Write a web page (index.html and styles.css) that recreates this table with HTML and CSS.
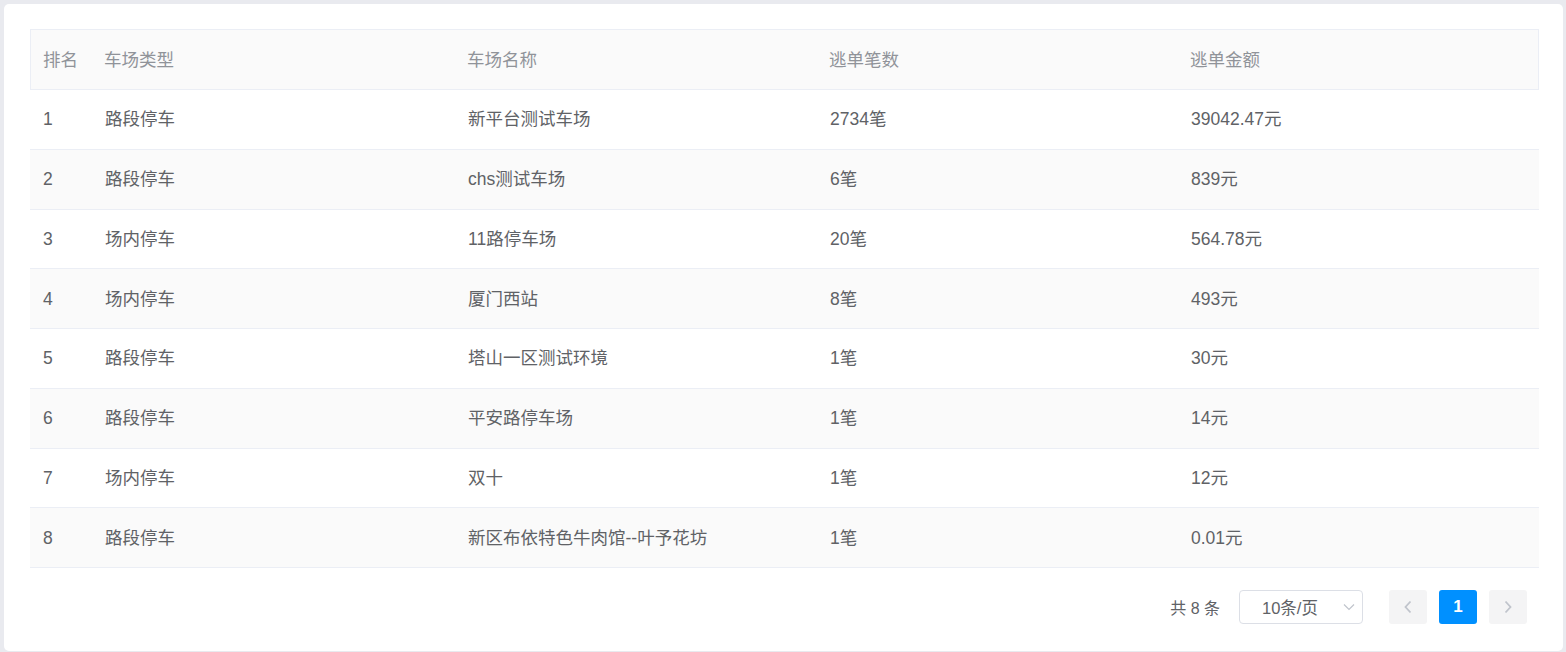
FILE: index.html
```html
<!DOCTYPE html>
<html lang="zh-CN">
<head>
<meta charset="utf-8">
<title>逃单排名</title>
<link rel="stylesheet" href="styles.css">
</head>
<body>
<div class="card">
  <div class="table">
    <div class="row head">
      <div class="cell">排名</div>
      <div class="cell">车场类型</div>
      <div class="cell">车场名称</div>
      <div class="cell">逃单笔数</div>
      <div class="cell">逃单金额</div>
    </div>
    <div class="row">
      <div class="cell">1</div><div class="cell">路段停车</div><div class="cell">新平台测试车场</div><div class="cell">2734笔</div><div class="cell">39042.47元</div>
    </div>
    <div class="row stripe">
      <div class="cell">2</div><div class="cell">路段停车</div><div class="cell">chs测试车场</div><div class="cell">6笔</div><div class="cell">839元</div>
    </div>
    <div class="row">
      <div class="cell">3</div><div class="cell">场内停车</div><div class="cell">11路停车场</div><div class="cell">20笔</div><div class="cell">564.78元</div>
    </div>
    <div class="row stripe">
      <div class="cell">4</div><div class="cell">场内停车</div><div class="cell">厦门西站</div><div class="cell">8笔</div><div class="cell">493元</div>
    </div>
    <div class="row">
      <div class="cell">5</div><div class="cell">路段停车</div><div class="cell">塔山一区测试环境</div><div class="cell">1笔</div><div class="cell">30元</div>
    </div>
    <div class="row stripe">
      <div class="cell">6</div><div class="cell">路段停车</div><div class="cell">平安路停车场</div><div class="cell">1笔</div><div class="cell">14元</div>
    </div>
    <div class="row">
      <div class="cell">7</div><div class="cell">场内停车</div><div class="cell">双十</div><div class="cell">1笔</div><div class="cell">12元</div>
    </div>
    <div class="row stripe">
      <div class="cell">8</div><div class="cell">路段停车</div><div class="cell">新区布依特色牛肉馆--叶予花坊</div><div class="cell">1笔</div><div class="cell">0.01元</div>
    </div>
  </div>
  <div class="pager">
    <span class="total">共 8 条</span>
    <div class="select">
      <span>10条/页</span>
      <svg class="caret" width="12" height="8" viewBox="0 0 12 8"><path d="M1 1.5 L6 6.5 L11 1.5" fill="none" stroke="#c0c4cc" stroke-width="1.2"/></svg>
    </div>
    <button class="pbtn nav"><svg width="10" height="14" viewBox="0 0 10 14"><path d="M7.5 1.5 L2.5 7 L7.5 12.5" fill="none" stroke="#c0c4cc" stroke-width="1.8"/></svg></button>
    <button class="pbtn active">1</button>
    <button class="pbtn nav"><svg width="10" height="14" viewBox="0 0 10 14"><path d="M2.5 1.5 L7.5 7 L2.5 12.5" fill="none" stroke="#c0c4cc" stroke-width="1.8"/></svg></button>
  </div>
</div>
</body>
</html>
```

FILE: styles.css
```css
html, body {
  margin: 0;
  height: 100%;
}
body {
  background: #e9eaef;
  padding: 4px 3px 0 4px;
  box-sizing: border-box;
  font-family: "Liberation Sans", "Noto Sans CJK SC", sans-serif;
  overflow: hidden;
}
.card {
  background: #fff;
  border-radius: 5px;
  height: 647px;
  box-sizing: border-box;
  padding: 25px 24px 0 26px;
}
.table {
  display: flex;
  flex-direction: column;
}
.row {
  display: grid;
  grid-template-columns: 62px 363px 362px 361px 1fr;
  height: 59.75px;
  box-sizing: border-box;
  border-bottom: 1px solid #ebeef5;
  align-items: center;
  font-size: 17.5px;
  color: #606266;
}
.row.head {
  grid-template-columns: 61px 363px 362px 361px 1fr;
  height: 61px;
  background: #fafafa;
  border: 1px solid #ebeef5;
  color: #909399;
}
.row.head .cell {
  padding-left: 12px;
}
.row.stripe {
  background: #fafafa;
}
.cell {
  padding-left: 13px;
  white-space: nowrap;
  line-height: 22px;
}
.pager {
  display: flex;
  justify-content: flex-end;
  align-items: center;
  padding: 22px 12px 0 0;
}
.total {
  font-size: 16px;
  color: #606266;
  margin-right: 19px;
}
.select {
  width: 124px;
  height: 34px;
  box-sizing: border-box;
  border: 1px solid #dcdfe6;
  border-radius: 4px;
  display: flex;
  align-items: center;
  padding-left: 22px;
  padding-right: 7px;
  font-size: 16.5px;
  color: #606266;
  margin-right: 26px;
}
.select span {
  flex: 1;
}
.pbtn {
  width: 38px;
  height: 34px;
  border: none;
  border-radius: 3px;
  background: #f4f4f5;
  display: flex;
  align-items: center;
  justify-content: center;
  padding: 0;
  margin-left: 12px;
  font-family: "Liberation Sans", sans-serif;
  font-size: 17px;
  font-weight: bold;
}
.pbtn:first-of-type {
  margin-left: 0;
}
.pbtn.active {
  background: #0090ff;
  color: #fff;
}
```
